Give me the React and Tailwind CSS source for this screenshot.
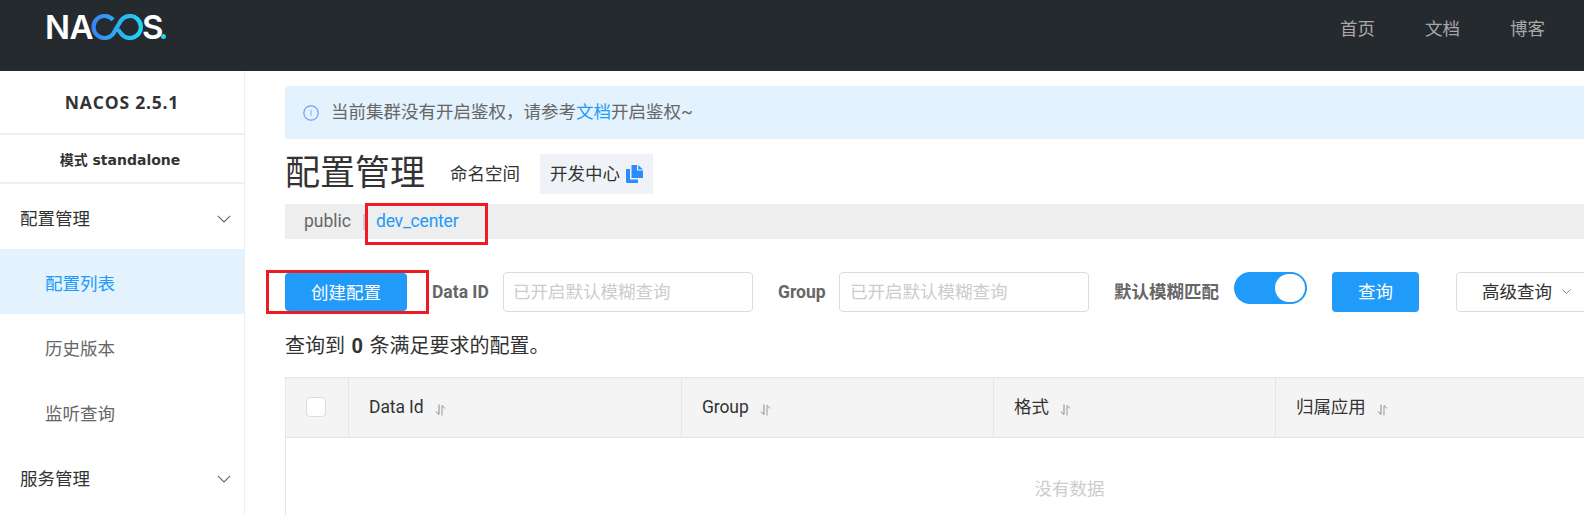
import React from "react";

function Chevron({ className }) {
  return (
    <svg className={className} width="14" height="8" viewBox="0 0 14 8" fill="none">
      <path d="M0.8 0.8 L7 7 L13.2 0.8" stroke="#666" strokeWidth="1.1" />
    </svg>
  );
}

function SortIcon() {
  return (
    <svg className="ml-[11px] mt-[4px] shrink-0" width="11" height="12" viewBox="0 0 11 12" fill="none">
      <path d="M4 0.5 V10.5 L0.8 7.6" stroke="#888" strokeWidth="1" />
      <path d="M7 11.5 V1.5 L10.2 4.4" stroke="#999" strokeWidth="1" />
    </svg>
  );
}

function GroupRow({ label }) {
  return (
    <div className="h-[65px] flex items-center justify-between pt-[5px] pl-[20px] pr-[13px] text-[17.5px] text-[#333]">
      <span>{label}</span>
      <Chevron />
    </div>
  );
}

function SubRow({ label, active }) {
  return (
    <div className={active ? "h-[65px] flex items-center pt-[5px] pl-[45px] text-[17.5px] bg-[#e3f2fd] text-[#209bfa]" : "h-[65px] flex items-center pt-[5px] pl-[45px] text-[17.5px] text-[#666]"}>
      {label}
    </div>
  );
}

function HeadCell({ label, className }) {
  return (
    <div className={"flex items-center h-full shrink-0 pl-[20px] border-r border-[#e6e6e6] text-[17.5px] text-[#333] " + className}>
      <span className="tracking-[-0.1px]">{label}</span>
      <SortIcon />
    </div>
  );
}

export default function App() {
  return (
    <div className="relative w-[1584px] h-[515px] overflow-hidden bg-white flex flex-col font-['Roboto','Noto_Sans_CJK_SC',sans-serif]">
      <header className="h-[71px] shrink-0 bg-[#252a2f] flex items-start justify-between">
        <div className="ml-[45px] mt-[11px] flex items-center h-[32px] text-white font-['Inter','Noto_Sans',sans-serif] font-semibold text-[33px] leading-none">
          <span className="w-[46px] shrink-0 -tracking-[0.5px]">NA</span>
          <svg className="-ml-[1px] shrink-0" width="53" height="26" viewBox="0 0 53 26" fill="none">
            <defs>
              <linearGradient id="inf" x1="0" y1="0" x2="53" y2="0" gradientUnits="userSpaceOnUse">
                <stop offset="0" stopColor="#3a7ff5" />
                <stop offset="1" stopColor="#1ed8f2" />
              </linearGradient>
            </defs>
            <path
              d="M23 6 A 11 11 0 1 0 23 20 L 31 6.5 A 11 11 0 1 1 31 19.5 L 28 15.5"
              stroke="url(#inf)"
              strokeWidth="4.2"
            />
          </svg>
          <span className="w-[17px] shrink-0 -ml-[1px]">S</span>
          <span className="w-[5px] h-[5px] shrink-0 rounded-full bg-[#1fd6ee] self-end mb-[4px] ml-[2px]" />
        </div>
        <nav className="flex gap-[50px] pr-[39px] pt-[17px] text-[17.5px] leading-[24px] text-[#a8a8a8]">
          <span>首页</span>
          <span>文档</span>
          <span>博客</span>
        </nav>
      </header>

      <div className="flex flex-1 min-h-0">
        <aside className="w-[245px] shrink-0 border-r border-[#eee]">
          <div className="h-[64px] flex items-center justify-center border-b-2 border-[#eee] text-[17.5px] font-bold tracking-[0.8px] text-[#333] font-['Open_Sans','Noto_Sans_CJK_SC',sans-serif]">
            NACOS 2.5.1
          </div>
          <div className="h-[49px] flex items-center justify-center pt-[3px] pr-[4px] border-b-2 border-[#eee] text-[14px] font-bold text-[#333] font-['DejaVu_Sans','Noto_Sans_CJK_SC',sans-serif]">
            模式 standalone
          </div>
          <GroupRow label="配置管理" />
          <SubRow label="配置列表" active />
          <SubRow label="历史版本" />
          <SubRow label="监听查询" />
          <GroupRow label="服务管理" />
        </aside>

        <main className="flex-1 min-w-0 pl-[40px] pt-[15px]">
          <div className="w-[1569px]">
            <div className="h-[53px] rounded-[4px] bg-[#e3f2fd] flex items-center pl-[18px] text-[17.5px] text-[#666]">
              <svg width="16" height="16" viewBox="0 0 16 16" fill="none" className="shrink-0">
                <circle cx="8" cy="8" r="7.2" stroke="#6d9dfb" strokeWidth="1.2" />
                <path d="M8 4.8 V11" stroke="#9db8ee" strokeWidth="1.2" />
              </svg>
              <span className="ml-[12px]">
                当前集群没有开启鉴权，请参考<span className="text-[#209bfa]">文档</span>开启鉴权~
              </span>
            </div>

            <div className="mt-[15px] h-[40px] flex items-center">
              <h1 className="text-[35px] leading-[40px] text-[#333] w-[165px]">配置管理</h1>
              <span className="text-[17.5px] text-[#333] w-[90px]">命名空间</span>
              <div className="w-[113px] h-[40px] bg-[#eff3f8] flex items-center pl-[10px] text-[17.5px] text-[#333]">
                <span>开发中心</span>
                <svg width="17" height="18" viewBox="0 0 17 18" className="ml-[6px] shrink-0">
                  <path d="M0 4 H4 V14.5 H12 V18 H1.5 A1.5 1.5 0 0 1 0 16.5 Z" fill="#2c8cff" />
                  <path d="M5.5 0 H11 V5.5 H17 V13 H5.5 Z" fill="#2c8cff" />
                  <path d="M12.2 0 L17 4.4 H12.2 Z" fill="#2c8cff" />
                </svg>
              </div>
            </div>

            <div className="mt-[10px] h-[35px] bg-[#eee] flex items-center pl-[19px] text-[17.5px]">
              <span className="text-[#666]">public</span>
              <span className="ml-[12px] w-[2px] h-[16px] bg-[#ccc]" />
              <span className="ml-[11px] tracking-[-0.2px] text-[#209bfa]">dev_center</span>
            </div>

            <div className="mt-[33px] h-[40px] flex items-center">
              <button className="w-[122px] h-[38px] pt-[2px] rounded-[4px] bg-[#209bfa] text-white text-[17.5px]">创建配置</button>
              <label className="ml-[25px] w-[71px] text-[17.5px] font-bold text-[#666]">Data ID</label>
              <div className="w-[250px] h-[40px] rounded-[4px] border border-[#dcdcdc] flex items-center pl-[9px] text-[17.5px] text-[#ccc]">已开启默认模糊查询</div>
              <label className="ml-[25px] w-[61px] text-[17.5px] font-bold text-[#666]">Group</label>
              <div className="w-[250px] h-[40px] rounded-[4px] border border-[#dcdcdc] flex items-center pl-[10px] text-[17.5px] text-[#ccc]">已开启默认模糊查询</div>
              <label className="ml-[25px] w-[120px] text-[17.5px] font-bold text-[#666]">默认模糊匹配</label>
              <div className="w-[73px] h-[32px] self-start rounded-full bg-[#209bfa] flex items-center justify-end pr-[2px]">
                <span className="w-[30px] h-[28px] rounded-full bg-white" />
              </div>
              <button className="ml-[25px] w-[87px] h-[40px] rounded-[4px] bg-[#209bfa] text-white text-[17.5px]">查询</button>
              <div className="ml-[37px] w-[140px] h-[40px] rounded-[4px] border border-[#dcdcdc] flex items-center pl-[25px] text-[17.5px] text-[#333]">
                <span>高级查询</span>
                <svg width="9" height="6" viewBox="0 0 9 6" fill="none" className="ml-[10px]">
                  <path d="M0.5 0.5 L4.5 4.5 L8.5 0.5" stroke="#888" strokeWidth="1" />
                </svg>
              </div>
            </div>

            <div className="mt-[20px] h-[28px] leading-[28px] text-[20px] [word-spacing:1.5px] text-[#333]">
              查询到 <strong className="font-bold">0</strong> 条满足要求的配置。
            </div>

            <div className="mt-[17px] border border-[#e6e6e6] h-[200px]">
              <div className="h-[60px] bg-[#f4f4f4] border-b border-[#e6e6e6] flex items-center">
                <div className="w-[63px] h-full shrink-0 border-r border-[#e6e6e6] flex items-center pl-[20px]">
                  <span className="w-[20px] h-[20px] rounded-[4px] border border-[#dcdcdc] bg-white -mt-[2px]" />
                </div>
                <HeadCell label="Data Id" className="w-[333px]" />
                <HeadCell label="Group" className="w-[312px]" />
                <HeadCell label="格式" className="w-[282px]" />
                <HeadCell label="归属应用" className="w-[300px] border-r-0" />
              </div>
              <div className="pt-[39px] text-center text-[17.5px] leading-[24px] text-[#ccc]">没有数据</div>
            </div>
          </div>
        </main>
      </div>

      <div className="absolute left-[365px] top-[203px] w-[123px] h-[42px] border-[3px] border-[#ed1c24]" />
      <div className="absolute left-[266px] top-[270px] w-[163px] h-[44px] border-[3px] border-[#ed1c24]" />
    </div>
  );
}
